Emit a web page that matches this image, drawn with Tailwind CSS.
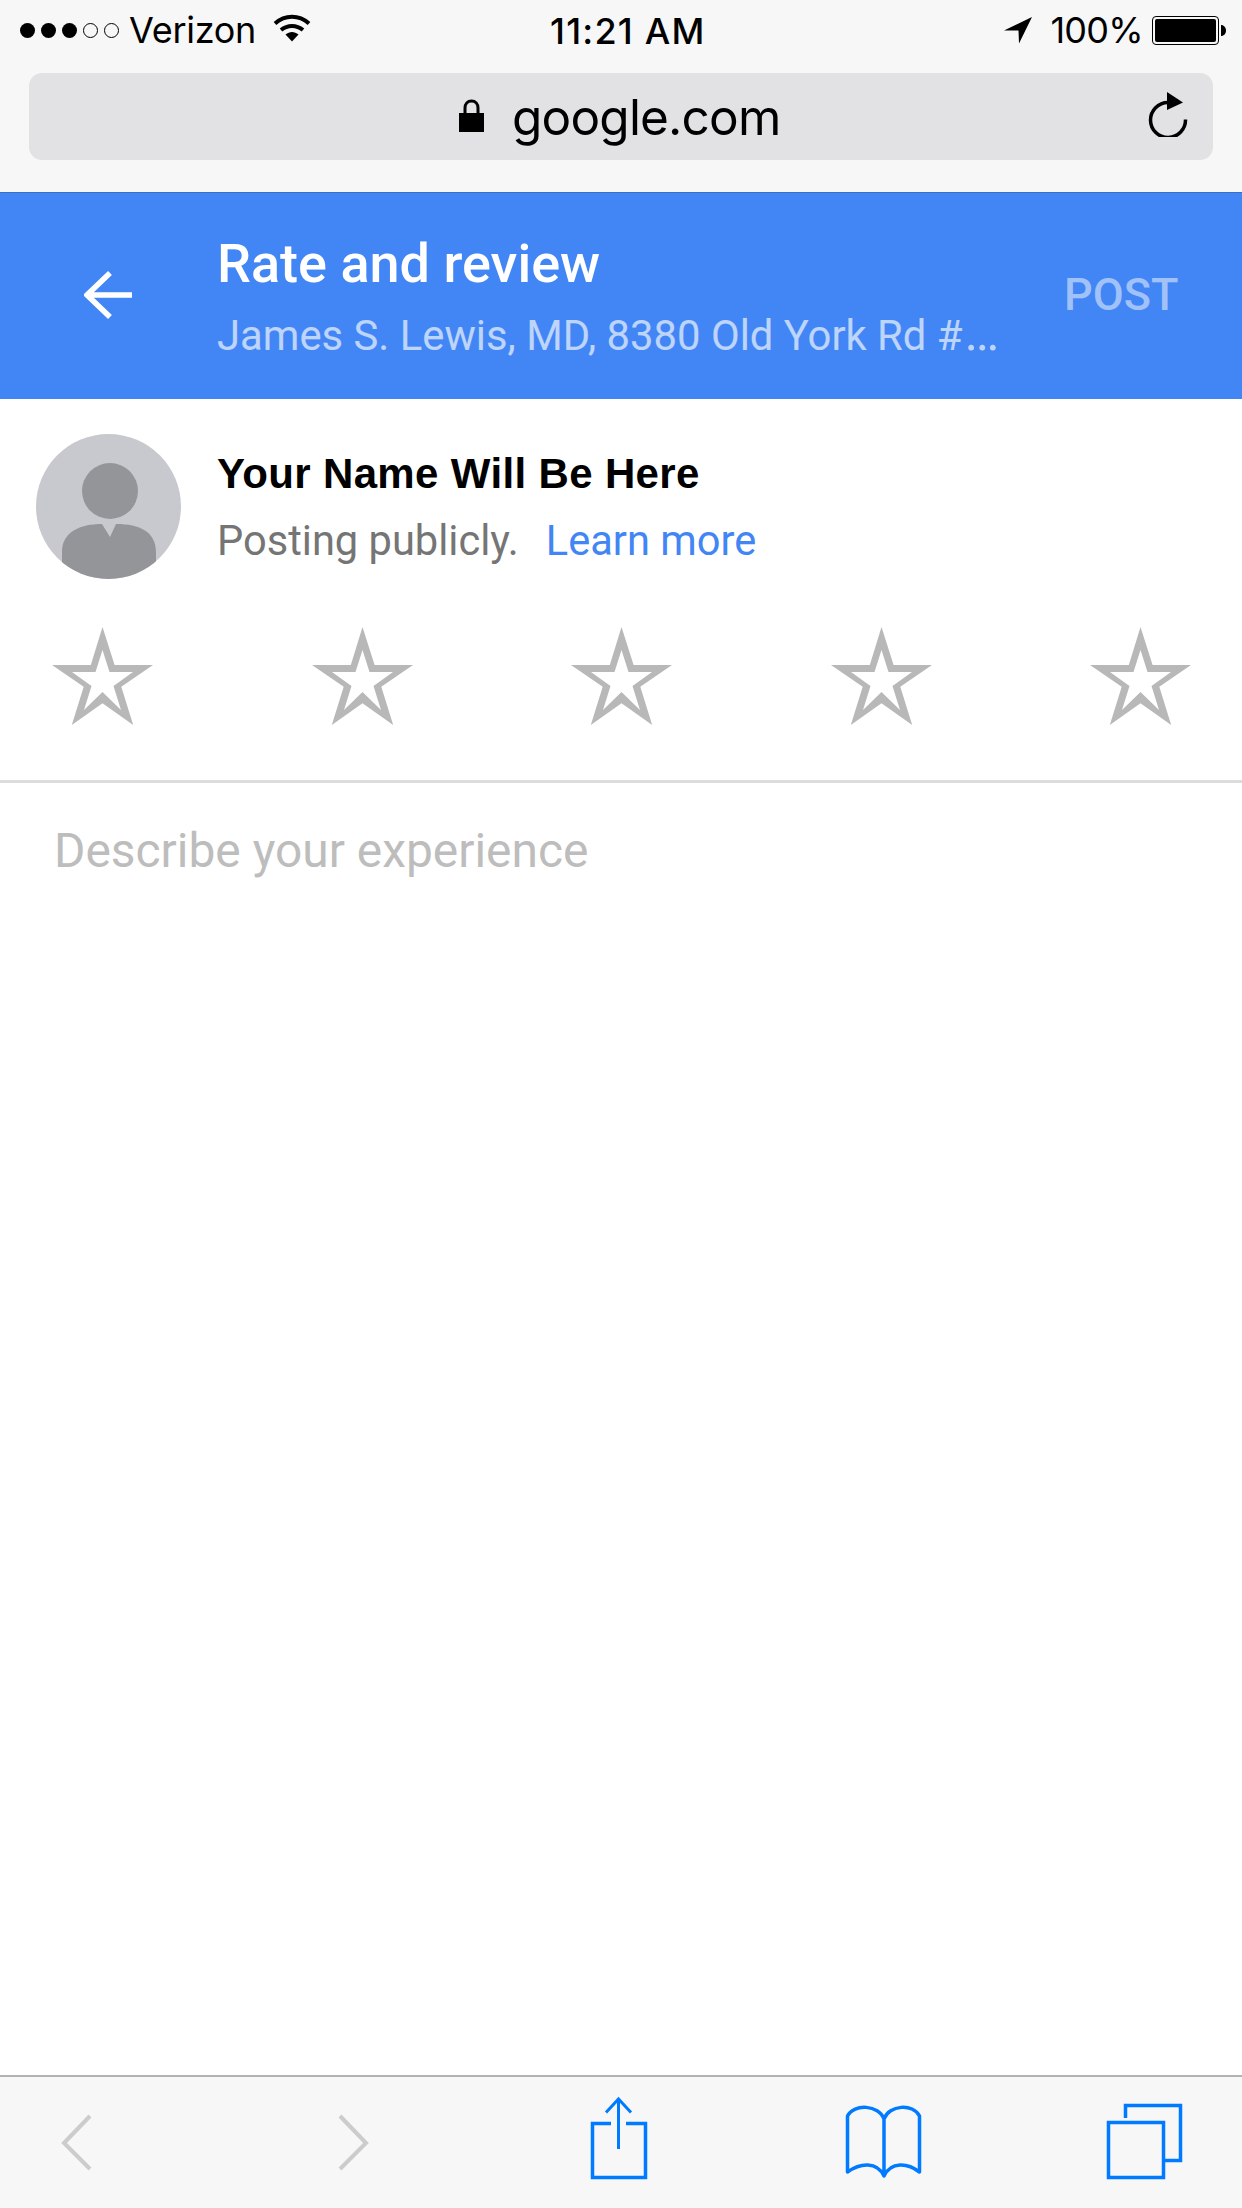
<!DOCTYPE html>
<html lang="en">
<head>
  <meta charset="UTF-8" />
  <meta name="viewport" content="width=device-width, initial-scale=1.0" />
  <title>Rate and review</title>
  <script src="https://cdn.jsdelivr.net/npm/@tailwindcss/browser@4"></script>
</head>
<body class="bg-white">
<div class="w-[1242px] h-[2208px] flex flex-col overflow-hidden font-['Roboto',sans-serif]">

  <!-- Safari chrome -->
  <div class="h-[192px] bg-[#f7f7f7] px-[29px] font-['Inter',sans-serif] text-black shrink-0">
    <div class="h-[73px] flex items-start pt-[12px] -mx-[29px] pl-[20px] pr-[16px] relative">
      <div class="flex items-center h-[36px] gap-[6px]">
        <span class="w-[15px] h-[15px] rounded-full bg-black"></span>
        <span class="w-[15px] h-[15px] rounded-full bg-black"></span>
        <span class="w-[15px] h-[15px] rounded-full bg-black"></span>
        <span class="w-[15px] h-[15px] rounded-full border border-black"></span>
        <span class="w-[15px] h-[15px] rounded-full border border-black"></span>
        <span class="ml-[4px] text-[36px] leading-[36px] tracking-[-0.3px]">Verizon</span>
        <svg class="ml-[11px] -mt-[5px]" width="38" height="28" viewBox="0 0 38 28">
          <path d="M2 9.500C12 0.500 26 0.500 36 9.500" fill="none" stroke="black" stroke-width="4"/>
          <path d="M8 16C14.500 10.500 23.500 10.500 30 16" fill="none" stroke="black" stroke-width="4"/>
          <path d="M12.500 20.500C16.500 17 21.500 17 25.500 20.500L19 27.500Z" fill="black"/>
        </svg>
      </div>
      <span class="absolute left-[550px] top-[12px] text-[36px] leading-[38px] font-medium tracking-[1.2px]">11:21 AM</span>
      <div class="ml-auto flex items-center h-[36px]">
        <svg width="29" height="27" viewBox="0 0 29 27"><path d="M28 0L0 13.500H14.500L15 26.500Z" fill="black"/></svg>
        <span class="ml-[17px] text-[36px] leading-[36px] tracking-[-0.7px]">100%</span>
        <div class="ml-[9px] w-[67px] h-[29px] rounded-[4px] border border-black p-[2px]">
          <div class="w-full h-full rounded-[2px] bg-black"></div>
        </div>
        <svg class="ml-[2px]" width="5" height="11" viewBox="0 0 5 11"><path d="M0 0C3 0 5 2.500 5 5.500S3 11 0 11Z" fill="black"/></svg>
      </div>
    </div>
    <div class="h-[87px] rounded-[13px] bg-[#e2e2e4] flex items-center pl-[430px] pr-[25px]">
      <svg width="25" height="33" viewBox="0 0 25 33" class="-mt-[3px]">
        <path d="M6 15V9C6 5 8.500 2 12.500 2S19 5 19 9V15" fill="none" stroke="black" stroke-width="3"/>
        <rect x="0" y="14" width="25" height="19" fill="black"/>
      </svg>
      <span class="ml-[28px] text-[49.500px] leading-[56px] tracking-[-0.8px]">google.com</span>
      <svg class="ml-auto -mt-[4px]" width="40" height="45" viewBox="0 0 40 45">
        <path d="M20 10.500A17.500 17.500 0 1 0 37.500 27.500" fill="none" stroke="black" stroke-width="3.500"/>
        <path d="M19 0L35 10.500L19 18Z" fill="black"/>
      </svg>
    </div>
  </div>

  <!-- Blue title bar -->
  <div class="h-[207px] bg-[#4285f4] border-t border-[#3b6fc4] flex items-center shrink-0">
    <svg class="ml-[84px] -mt-[2px] shrink-0" width="48" height="48" viewBox="0 0 48 48">
      <path d="M48 24H4M26 2L3 24L26 46" fill="none" stroke="white" stroke-width="5.500"/>
    </svg>
    <div class="ml-[85px] w-[790px] mt-[6px]">
      <div class="text-[54px] leading-[60px] font-medium text-white -mt-[4px]">Rate and review</div>
      <div class="mt-[17px] text-[41.800px] leading-[50px] text-white/65 whitespace-nowrap">James S. Lewis, MD, 8380 Old York Rd #<span class="ml-[2px] text-[52px] leading-[40px]">…</span></div>
    </div>
    <span class="ml-[57px] -mt-[3px] text-[45px] font-medium text-white/50">POST</span>
  </div>

  <!-- Review form -->
  <div class="flex-1 bg-white">
    <div class="flex pl-[36px] pt-[35px]">
      <svg class="rounded-full shrink-0" width="145" height="145" viewBox="0 0 145 145">
        <rect width="145" height="145" fill="#c7c9cf"/>
        <ellipse cx="74" cy="57" rx="28" ry="28" fill="#949599"/>
        <path d="M26 145V118C26 98 44 90 66 90L74 103L80 90C104 90 120 98 120 118V145Z" fill="#949599"/>
      </svg>
      <div class="ml-[36px] pt-[14px]">
        <div class="font-['Liberation_Sans',sans-serif] font-bold text-[42px] leading-[52px] text-black tracking-[0.35px]">Your Name Will Be Here</div>
        <div class="mt-[16px] text-[41.600px] leading-[50px] text-[#757575]">Posting publicly.<span class="ml-[27px] text-[#4285f4]">Learn more</span></div>
      </div>
    </div>

    <div class="flex justify-between pl-[52px] pr-[51px] pt-[48px] pb-[55px]">
      <svg width="101" height="98" viewBox="0 0 101 98"><path fill="#b8b8b8" fill-rule="evenodd" d="M50.500 0L62.600 38H101L69.300 59.700L81.200 98L50.500 76.300L19.800 98L31.700 59.700L0 38H38.800ZM50.500 23L43.500 45H20L39.500 59L32 83L50.500 65L69 83L61.500 59L81 45H57.500Z"/></svg>
      <svg width="101" height="98" viewBox="0 0 101 98"><path fill="#b8b8b8" fill-rule="evenodd" d="M50.500 0L62.600 38H101L69.300 59.700L81.200 98L50.500 76.300L19.800 98L31.700 59.700L0 38H38.800ZM50.500 23L43.500 45H20L39.500 59L32 83L50.500 65L69 83L61.500 59L81 45H57.500Z"/></svg>
      <svg width="101" height="98" viewBox="0 0 101 98"><path fill="#b8b8b8" fill-rule="evenodd" d="M50.500 0L62.600 38H101L69.300 59.700L81.200 98L50.500 76.300L19.800 98L31.700 59.700L0 38H38.800ZM50.500 23L43.500 45H20L39.500 59L32 83L50.500 65L69 83L61.500 59L81 45H57.500Z"/></svg>
      <svg width="101" height="98" viewBox="0 0 101 98"><path fill="#b8b8b8" fill-rule="evenodd" d="M50.500 0L62.600 38H101L69.300 59.700L81.200 98L50.500 76.300L19.800 98L31.700 59.700L0 38H38.800ZM50.500 23L43.500 45H20L39.500 59L32 83L50.500 65L69 83L61.500 59L81 45H57.500Z"/></svg>
      <svg width="101" height="98" viewBox="0 0 101 98"><path fill="#b8b8b8" fill-rule="evenodd" d="M50.500 0L62.600 38H101L69.300 59.700L81.200 98L50.500 76.300L19.800 98L31.700 59.700L0 38H38.800ZM50.500 23L43.500 45H20L39.500 59L32 83L50.500 65L69 83L61.500 59L81 45H57.500Z"/></svg>
    </div>

    <div class="h-[3px] bg-[#dcdcdc]"></div>
    <div class="pl-[54px] pt-[40px] text-[47.900px] leading-[56px] text-[#bdbdbd]">Describe your experience</div>
  </div>

  <!-- Safari toolbar -->
  <div class="h-[133px] bg-[#f7f7f7] border-t-2 border-[#b2b2b2] flex items-start pt-[13px] shrink-0">
    <svg class="ml-[56px]" width="40" height="100" viewBox="0 0 40 100">
      <path d="M34 26L8 53L34 79" fill="none" stroke="#cccccc" stroke-width="4"/>
    </svg>
    <svg class="ml-[237px]" width="40" height="100" viewBox="0 0 40 100">
      <path d="M7 26L33 53L7 79" fill="none" stroke="#cccccc" stroke-width="4"/>
    </svg>
    <svg class="ml-[212px]" width="67" height="100" viewBox="0 0 67 100">
      <path d="M26 33.500H7.500V87.500H60.500V33.500H41" fill="none" stroke="#007aff" stroke-width="3.500"/>
      <path d="M33.500 9V59" fill="none" stroke="#007aff" stroke-width="3"/>
      <path d="M21 22.500L33.500 9L46 22.500" fill="none" stroke="#007aff" stroke-width="3"/>
    </svg>
    <svg class="ml-[190px]" width="83" height="100" viewBox="0 0 83 100">
      <path d="M42 29C37 15 12 13 5.500 26V82C18 73 35 71 42 86C49 71 66 73 77.500 82V26C71 13 47 15 42 29V84" fill="none" stroke="#007aff" stroke-width="3.500" stroke-linejoin="round"/>
    </svg>
    <svg class="ml-[178px]" width="83" height="100" viewBox="0 0 83 100">
      <rect x="5.500" y="32.500" width="55" height="55" fill="none" stroke="#007aff" stroke-width="3.500"/>
      <path d="M22.500 28V15.500H77.500V70.500H62" fill="none" stroke="#007aff" stroke-width="3.500"/>
    </svg>
  </div>
</div>
</body>
</html>
